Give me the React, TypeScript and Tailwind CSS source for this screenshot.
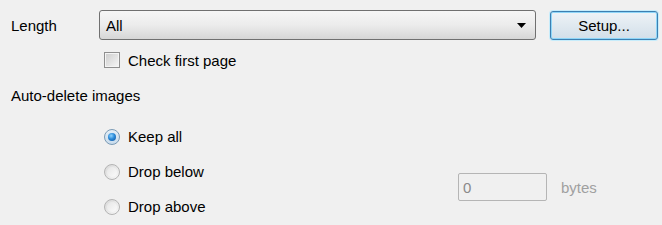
import React from "react";

const font = { fontFamily: '"Liberation Sans", Arial, sans-serif' };

function Radio({ checked, label }: { checked?: boolean; label: string }) {
  return (
    <div className="flex h-[35px] items-center">
      <span
        className={`flex h-[16px] w-[16px] items-center justify-center rounded-full border ${
          checked
            ? "border-[#7a9ab5] bg-gradient-to-b from-[#e4eef6] to-[#c9dcec]"
            : "border-[#b4b4b4] bg-gradient-to-br from-[#d8d8d8] to-[#f8f8f8]"
        }`}
      >
        {checked ? (
          <span className="h-[8px] w-[8px] rounded-full bg-[radial-gradient(circle_at_40%_35%,#8fd3ff_0%,#2a8ad8_45%,#0f4f9a_100%)]" />
        ) : (
          <span className="h-[10px] w-[10px] rounded-full bg-gradient-to-br from-[#e6e6e6] to-[#fbfbfb]" />
        )}
      </span>
      <span className="ml-[8px] text-[15px] text-black">{label}</span>
    </div>
  );
}

export default function App() {
  return (
    <div
      className="h-[225px] w-[662px] overflow-hidden bg-[#f0f0f0] pt-[10px] leading-none"
      style={font}
    >
      {/* length row */}
      <div className="flex items-center">
        <span className="w-[99px] pl-[11px] text-[15px] text-black">Length</span>
        <div className="flex h-[30px] w-[437px] items-center justify-between rounded-[3px] border border-[#707070] bg-gradient-to-b from-[#f6f6f6] via-[#ececec] to-[#d6d6d6] pl-[6px] pr-[9px]">
          <span className="text-[15px] text-black">All</span>
          <svg width="9" height="5" viewBox="0 0 9 5">
            <path d="M0 0h9L4.5 5z" fill="#000" />
          </svg>
        </div>
        <button className="ml-[14px] flex h-[29px] w-[108px] items-center justify-center rounded-[3px] border border-[#3c7fb1] bg-gradient-to-b from-[#eef3f7] to-[#d2dfe9] text-[15px] text-black shadow-[inset_0_0_0_1px_#8ed6f8,0_0_0_1px_#c6ecfb]">
          Setup...
        </button>
      </div>

      {/* check first page */}
      <div className="mt-[12px] flex items-center pl-[104px]">
        <span className="flex h-[16px] w-[16px] items-center justify-center border border-[#8f8f8f] bg-[#f4f4f4]">
          <span className="h-[12px] w-[12px] bg-gradient-to-br from-[#cfcfcf] to-[#f4f4f4]" />
        </span>
        <span className="ml-[8px] text-[15px] text-black">Check first page</span>
      </div>

      {/* auto-delete */}
      <div className="mt-[20px] pl-[11px] text-[15px] text-black">Auto-delete images</div>

      <div className="mt-[16px] flex items-start pl-[104px]">
        <div className="flex w-[354px] flex-col">
          <Radio checked label="Keep all" />
          <Radio label="Drop below" />
          <Radio label="Drop above" />
        </div>
        <div className="mt-[54px] flex items-center">
          <div className="flex h-[28px] w-[89px] items-center rounded-[2px] border border-[#b5b5b5] bg-[#f0f0f0] pl-[4px] text-[15px] text-[#8a8a8a]">
            0
          </div>
          <span className="ml-[14px] text-[15px] text-[#a0a0a0]">bytes</span>
        </div>
      </div>
    </div>
  );
}
